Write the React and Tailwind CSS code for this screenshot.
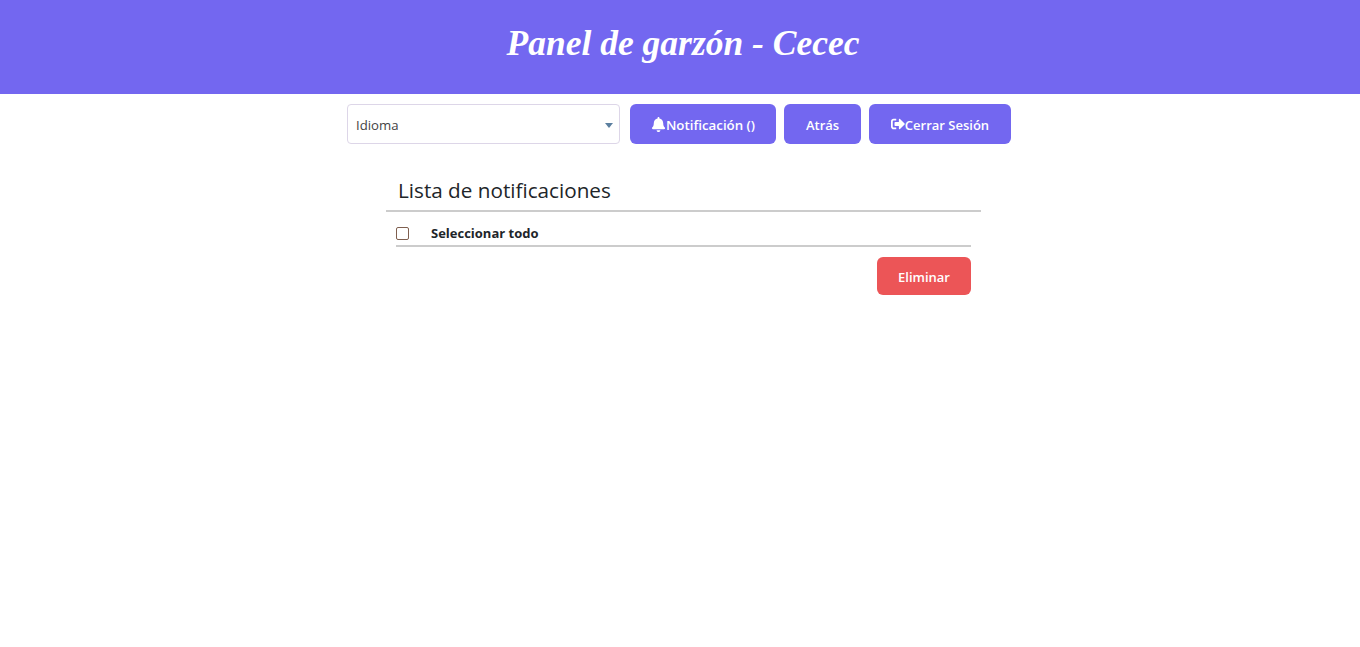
import React from "react";
import { FaBell, FaSignOutAlt } from "react-icons/fa";

const btn =
  "flex h-10 items-center justify-center rounded-md bg-[#7367f0] pt-1 font-semibold text-white";

export default function App() {
  return (
    <div className="min-h-[647px] bg-white font-['Open_Sans','Noto_Sans',sans-serif] text-[#212529]">
      <header className="flex h-[94px] items-center justify-center bg-[#7367f0] pb-[6px] pl-[6px]">
        <h1 className="font-['Liberation_Serif',serif] text-[35.5px] font-bold italic leading-none text-white">
          Panel de garzón - Cecec
        </h1>
      </header>

      <div className="ml-[347px] mt-[10px] flex items-center">
        <div className="relative flex h-10 w-[273px] items-center rounded-[4px] border border-[#ddd6e8] pl-2 pt-1 text-[13.2px] text-[#444]">
          Idioma
          <span className="absolute right-[6px] top-[18px] h-0 w-0 border-x-4 border-t-[5px] border-x-transparent border-t-[#5b7f9f]" />
        </div>
        <button className={`${btn} ml-[10px] w-[146px] text-[13.3px]`}>
          <FaBell className="-mt-1 text-[15px]" />
          Notificación ()
        </button>
        <button className={`${btn} ml-2 w-[77px] text-[13px]`}>Atrás</button>
        <button className={`${btn} ml-2 w-[142px] text-[13px]`}>
          <FaSignOutAlt className="-mt-1 text-[14px]" />
          Cerrar Sesión
        </button>
      </div>

      <section className="ml-[386px] mt-[30px] w-[595px]">
        <h2 className="border-b-2 border-[#ccc] pb-1 pl-3 text-[20.7px] font-normal leading-[32px]">
          Lista de notificaciones
        </h2>
        <div className="mx-[10px]">
          <div className="flex h-[35px] items-center border-b-2 border-[#ccc] pt-[10px]">
            <span className="h-[13px] w-[13px] rounded-[2px] border border-[#7f5f4f]" />
            <span className="ml-[22px] text-[13px] font-bold">Seleccionar todo</span>
          </div>
          <div className="mt-[10px] flex justify-end">
            <button className="h-[38px] w-[94px] rounded-md bg-[#ec5557] pt-1 text-[13px] font-semibold text-white">
              Eliminar
            </button>
          </div>
        </div>
      </section>
    </div>
  );
}
